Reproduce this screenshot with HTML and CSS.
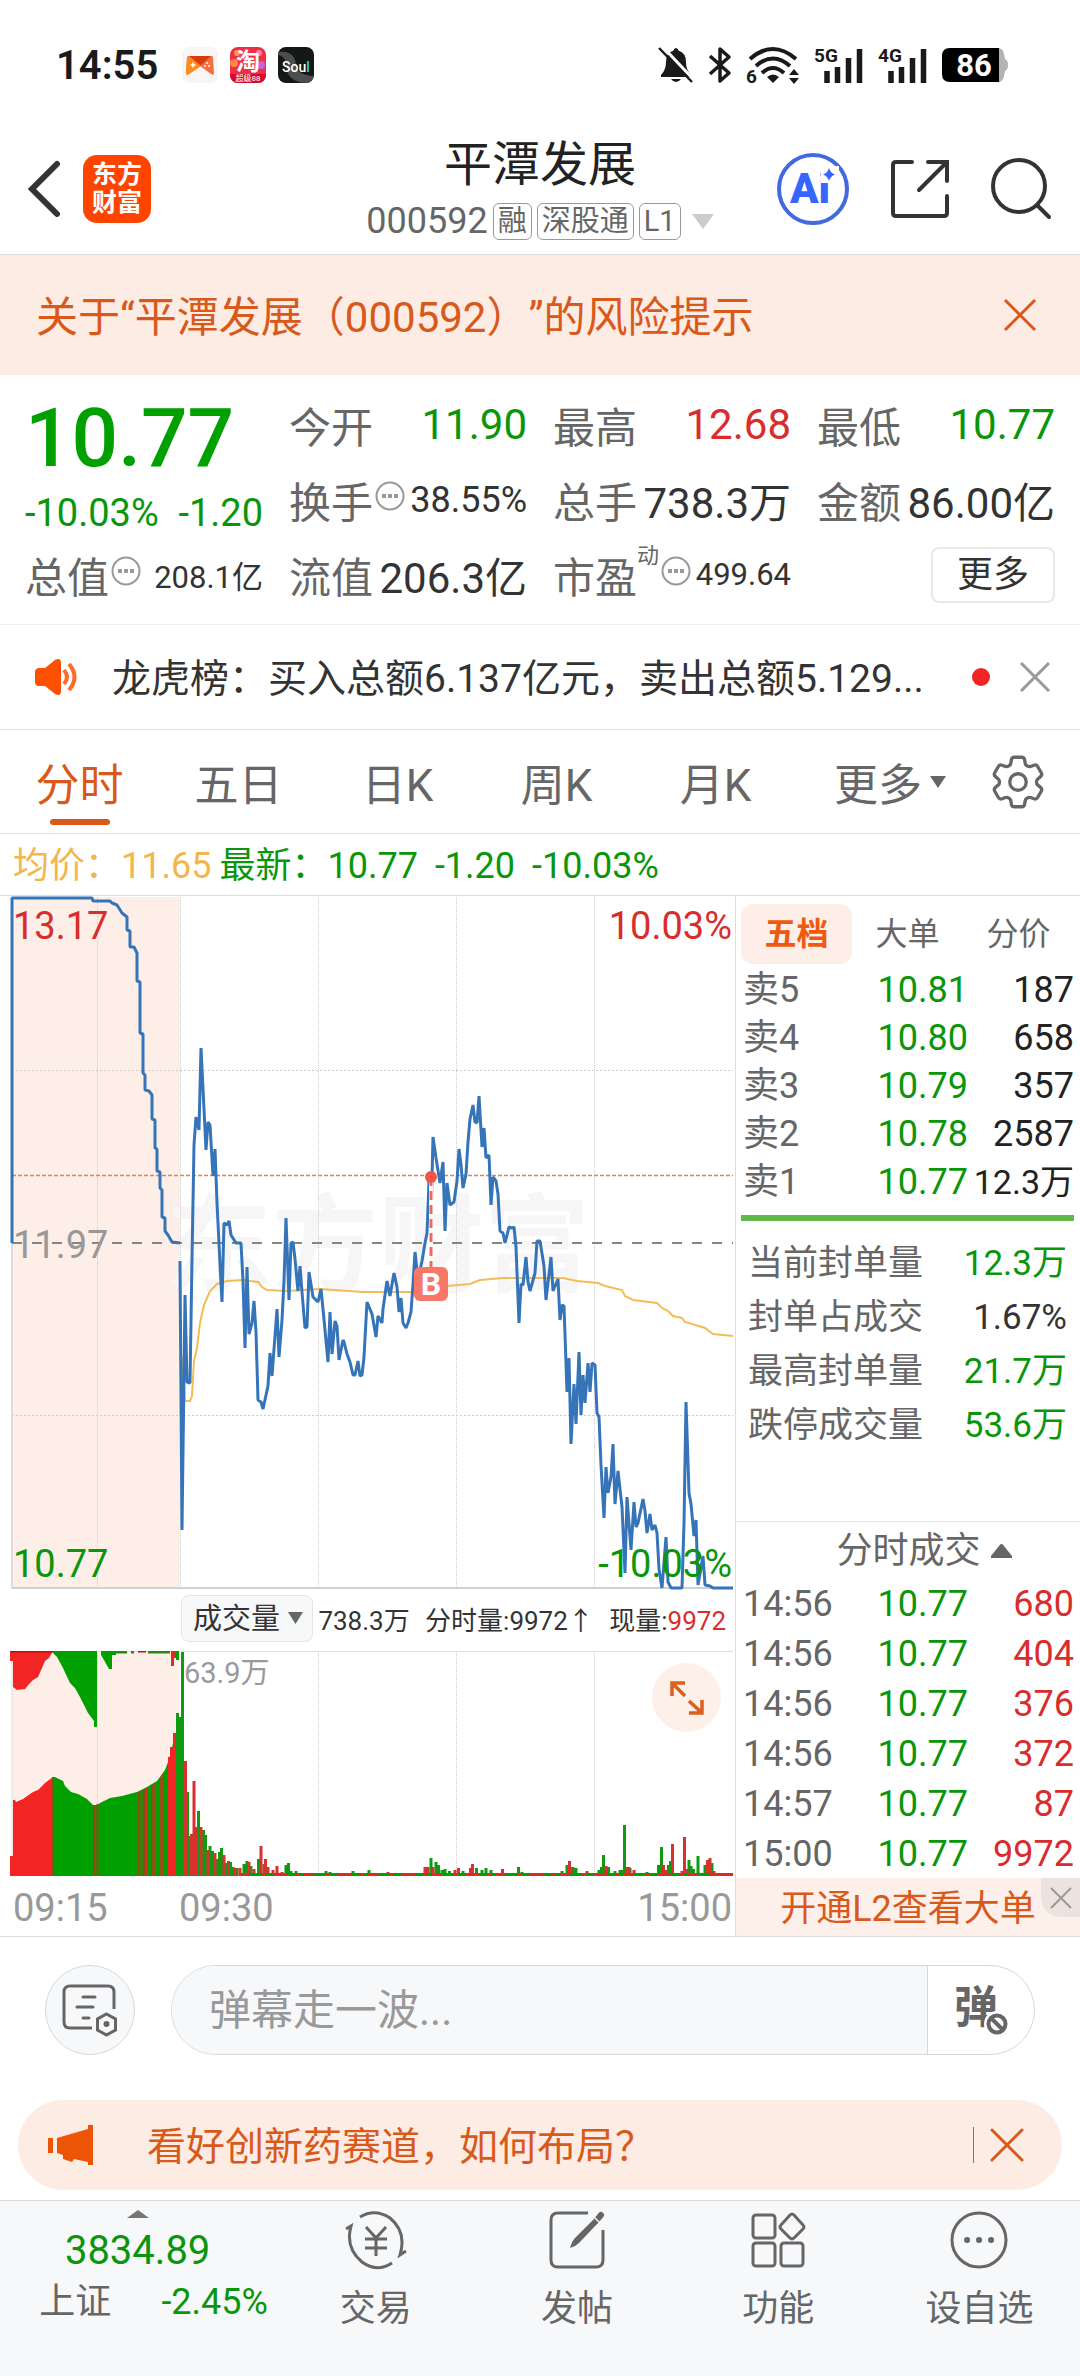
FILE: index.html
```html
<!DOCTYPE html>
<html lang="zh-CN">

<head>
    <meta charset="UTF-8">
    <meta name="viewport" content="width=device-width, initial-scale=1.0">
    <title>平潭发展 000592</title>
    <link rel="stylesheet" href="styles.css">
</head>

<body>
    <!-- status bar -->
    <div class="status-bar">
        <span class="clock">14:55</span>
        <svg class="app-icon" viewBox="0 0 36 36">
            <rect width="36" height="36" rx="8" fill="#f7f6f5"/>
            <path d="M6 9h24q1 0 1 2l1 15q0 3-3 1l-11-8-11 8q-3 2-3-1l1-15q0-2 1-2z" fill="#f7703c"/>
            <path d="M7 9h22l-11 10z" fill="#d63c0c"/>
            <path d="M7 9l12 10-12 8q-3 2-3-1l1-15z" fill="#ff8a1c"/>
            <path d="M8.500 18h5M11 15.500v5" stroke="#fff" stroke-width="1.500"/>
            <circle cx="25" cy="16" r="1" fill="#fff"/><circle cx="23" cy="19" r="1" fill="#fff"/><circle cx="27" cy="19" r="1" fill="#fff"/>
        </svg>
        <svg class="app-icon" viewBox="0 0 36 36">
            <rect width="36" height="36" rx="8" fill="#ee2f4a"/>
            <circle cx="7" cy="6" r="3" fill="#ff9a4a"/><circle cx="31" cy="18" r="4" fill="#c565d8"/><circle cx="4" cy="16" r="4" fill="#ff8a3a"/><circle cx="29" cy="6" r="3" fill="#ff7fa0"/>
            <path d="M0 27h36v1a8 8 0 0 1-8 8H8a8 8 0 0 1-8-8z" fill="#d8092f"/>
            <text class="tao" x="18" y="23">淘</text>
            <text class="tao-sub" x="18" y="34">超级88</text>
        </svg>
        <svg class="app-icon" viewBox="0 0 36 36">
            <rect width="36" height="36" rx="8" fill="#161817"/>
            <path d="M0 5q18-2 18 15 2 8 18 9-2 7-8 7-16-1-19-12Q9 9 0 8z" fill="#4b4e4d"/>
            <text class="soul" x="18" y="25">Sou<tspan fill="#2ad6c8">l</tspan></text>
        </svg>
        <div class="status-icons">
            <svg width="36" height="38" viewBox="0 0 36 38">
                <path d="M18 2q2 0 2.500 2.500Q28 7 28 16q0 8 5 13v2H3v-2q5-5 5-13 0-9 7.500-11.500Q16 2 18 2z" fill="#1a1a1a"/>
                <path d="M13 33h10q-2 3-5 3t-5-3z" fill="#1a1a1a"/>
                <path d="M3-1l34 36" stroke="#fff" stroke-width="3"/>
                <path d="M1 2l33 34" stroke="#1a1a1a" stroke-width="2.500"/>
            </svg>
            <svg width="24" height="38" viewBox="0 0 24 38">
                <path d="M2 10l19 17-9 8V3l9 8L2 28" fill="none" stroke="#1a1a1a" stroke-width="3.500" stroke-linejoin="round"/>
            </svg>
            <svg width="54" height="50" viewBox="0 -6 54 50">
                <g fill="none" stroke="#1a1a1a" stroke-width="4">
                    <path d="M4 13q23-20 46 0"/><path d="M10 20q17-15 34 0"/><path d="M16 27q11-10 22 0"/>
                </g>
                <path d="M27 37l-6-6q6-5 12 0z" fill="#1a1a1a"/>
                <path d="M48 23l5 6H43zM48 38l5-6H43z" fill="#1a1a1a"/>
                <text class="net" x="0" y="37">6</text>
            </svg>
            <svg width="50" height="50" viewBox="0 -6 50 50">
                <text class="net" x="0" y="16">5G</text>
                <path d="M13 37V25M23.500 37V21M34.500 37V12M45.500 37V3" stroke="#1a1a1a" stroke-width="5.500"/>
            </svg>
            <svg width="50" height="50" viewBox="0 -6 50 50">
                <text class="net" x="0" y="16">4G</text>
                <path d="M13 37V25M23.500 37V21M34.500 37V12M45.500 37V3" stroke="#1a1a1a" stroke-width="5.500"/>
            </svg>
            <svg width="66" height="34" viewBox="0 0 66 34">
                <path d="M50 0h6q5 0 6 6l1 5q3 1 3 6t-3 6l-1 5q-1 6-6 6h-6z" fill="#b3b3b3"/>
                <path d="M8 0h49v34H8q-8 0-8-8V8q0-8 8-8z" fill="#000"/>
                <text class="battery" x="32" y="28">86</text>
            </svg>
        </div>
    </div>

    <!-- title bar -->
    <header class="header">
        <div class="header-left">
            <button class="icon-btn" aria-label="返回">
                <svg width="34" height="58" viewBox="0 0 34 58"><path d="M29 4L4 29l25 25" fill="none" stroke="#333" stroke-width="6" stroke-linecap="round"/></svg>
            </button>
            <a class="logo" href="#">东方<br>财富</a>
        </div>
        <div class="title">
            <h1>平潭发展</h1>
            <div class="subtitle">
                <span>000592</span>
                <span class="tag">融</span>
                <span class="tag">深股通</span>
                <span class="tag">L1</span>
                <svg width="22" height="15" viewBox="0 0 22 15"><path d="M0 0h22L11 15z" fill="#ccc"/></svg>
            </div>
        </div>
        <div class="header-right">
            <button class="icon-btn" aria-label="Ai">
                <svg width="74" height="74" viewBox="0 0 74 74">
                    <circle cx="37" cy="37" r="34" fill="none" stroke="#4169e1" stroke-width="4"/>
                    <text class="ai" x="14" y="51">Ai</text>
                    <path d="M45 14h18v17H45z" fill="#fff"/>
                    <path d="M53 16q1.500 5 6 6.500-4.500 1.500-6 6.500-1.500-5-6-6.500 4.500-1.500 6-6.500z" fill="#3766ff"/>
                </svg>
            </button>
            <button class="icon-btn" aria-label="分享">
                <svg width="60" height="60" viewBox="0 0 60 60">
                    <path d="M22 3H6Q3 3 3 6v48q0 3 3 3h48q3 0 3-3V37M38 3h19v19M56 4L29 31" fill="none" stroke="#333" stroke-width="4" stroke-linecap="round"/>
                </svg>
            </button>
            <button class="icon-btn" aria-label="搜索">
                <svg width="62" height="62" viewBox="0 0 62 62">
                    <circle cx="29" cy="28" r="26" fill="none" stroke="#333" stroke-width="4"/>
                    <path d="M47 47l12 12" stroke="#333" stroke-width="4" stroke-linecap="round"/>
                </svg>
            </button>
        </div>
    </header>

    <!-- risk banner -->
    <div class="risk">
        <a href="#">关于“平潭发展（000592）”的风险提示</a>
        <button class="icon-btn" aria-label="关闭">
            <svg width="34" height="34" viewBox="0 0 34 34"><path d="M2 2l30 30M32 2L2 32" stroke="#d9591a" stroke-width="3"/></svg>
        </button>
    </div>

    <!-- quote summary -->
    <section class="quote">
        <div class="quote-price">
            <strong>10.77</strong>
            <p><span>-10.03%</span><span>-1.20</span></p>
        </div>
        <dl class="stat"><dt>今开</dt><dd class="green">11.90</dd></dl>
        <dl class="stat"><dt>最高</dt><dd class="red">12.68</dd></dl>
        <dl class="stat"><dt>最低</dt><dd class="green">10.77</dd></dl>
        <dl class="stat"><dt>换手<svg class="more-dot" viewBox="0 0 30 30"><circle cx="15" cy="15" r="13.500" fill="none" stroke="#999" stroke-width="2"/><path d="M7 15h4M13 15h4M19 15h4" stroke="#999" stroke-width="4"/></svg></dt><dd class="mid">38.55%</dd></dl>
        <dl class="stat"><dt>总手</dt><dd>738.3万</dd></dl>
        <dl class="stat"><dt>金额</dt><dd>86.00亿</dd></dl>
        <dl class="stat"><dt>总值<svg class="more-dot" viewBox="0 0 30 30"><circle cx="15" cy="15" r="13.500" fill="none" stroke="#999" stroke-width="2"/><path d="M7 15h4M13 15h4M19 15h4" stroke="#999" stroke-width="4"/></svg></dt><dd class="small">208.1亿</dd></dl>
        <dl class="stat"><dt>流值</dt><dd>206.3亿</dd></dl>
        <dl class="stat"><dt>市盈<sup>动</sup><svg class="more-dot" viewBox="0 0 30 30"><circle cx="15" cy="15" r="13.500" fill="none" stroke="#999" stroke-width="2"/><path d="M7 15h4M13 15h4M19 15h4" stroke="#999" stroke-width="4"/></svg></dt><dd class="small">499.64</dd></dl>
        <div class="stat stat-btn"><button class="more-btn">更多</button></div>
    </section>

    <!-- news ticker -->
    <div class="news">
        <svg width="46" height="38" viewBox="0 0 46 38">
            <path d="M2 14q0-3 3-4h7L22 2q6-3 6 3v28q0 6-6 3l-10-8H5q-3-1-3-4z" fill="#ff5000"/>
            <path d="M31 12q6 7 0 14M36 6q11 13 0 26" fill="none" stroke="#ff6a28" stroke-width="4"/>
        </svg>
        <a href="#">龙虎榜：买入总额6.137亿元，卖出总额5.129...</a>
        <i class="dot"></i>
        <button class="icon-btn" aria-label="关闭">
            <svg width="30" height="30" viewBox="0 0 30 30"><path d="M1 1l28 28M29 1L1 29" stroke="#999" stroke-width="3"/></svg>
        </button>
    </div>

    <!-- period tabs -->
    <nav class="tabs">
        <button class="tab active">分时</button>
        <button class="tab">五日</button>
        <button class="tab">日K</button>
        <button class="tab">周K</button>
        <button class="tab">月K</button>
        <button class="tab tab-more">更多<svg width="16" height="12" viewBox="0 0 16 12"><path d="M0 0h16L8 12z" fill="#666"/></svg></button>
        <button class="tab tab-gear" aria-label="设置">
            <svg width="66" height="66" viewBox="0 0 24 24" fill="none" stroke="#666" stroke-width="1.200">
                <path d="M9.594 3.94c.09-.542.56-.94 1.11-.94h2.593c.55 0 1.02.398 1.11.94l.213 1.281c.063.374.313.686.645.87.074.04.147.083.22.127.325.196.72.257 1.075.124l1.217-.456a1.125 1.125 0 0 1 1.37.49l1.296 2.247a1.125 1.125 0 0 1-.26 1.431l-1.003.827c-.293.241-.438.613-.43.992a7.723 7.723 0 0 1 0 .255c-.008.378.137.75.43.991l1.004.827c.424.35.534.955.26 1.43l-1.298 2.247a1.125 1.125 0 0 1-1.369.491l-1.217-.456c-.355-.133-.75-.072-1.076.124a6.47 6.47 0 0 1-.22.128c-.331.183-.581.495-.644.869l-.213 1.281c-.09.543-.56.94-1.11.94h-2.594c-.55 0-1.019-.398-1.11-.94l-.213-1.281c-.062-.374-.312-.686-.644-.87a6.52 6.52 0 0 1-.22-.127c-.325-.196-.72-.257-1.076-.124l-1.217.456a1.125 1.125 0 0 1-1.369-.49l-1.297-2.247a1.125 1.125 0 0 1 .26-1.431l1.004-.827c.292-.24.437-.613.43-.991a6.932 6.932 0 0 1 0-.255c.007-.38-.138-.751-.43-.992l-1.004-.827a1.125 1.125 0 0 1-.26-1.43l1.297-2.247a1.125 1.125 0 0 1 1.37-.491l1.216.456c.356.133.751.072 1.076-.124.072-.044.146-.086.22-.128.332-.183.582-.495.644-.869l.214-1.28Z"/>
                <circle cx="12" cy="12" r="3"/>
            </svg>
        </button>
    </nav>

    <div class="legend">
        <span class="avg">均价：11.65</span>
        <span class="green">最新：10.77</span>
        <span class="green">-1.20</span>
        <span class="green">-10.03%</span>
    </div>

    <main class="board">
        <div class="charts">
            <!-- price chart -->
            <svg class="chart" viewBox="0 0 735 694">
                <rect x="12" y="1" width="168" height="691" fill="#fdeee7"/>
                <text class="watermark" x="166" y="387">东方财富</text>
                <path d="M12 174.500H733M12 519.500H733" stroke="#ccc" stroke-dasharray="2 2"/>
                <path d="M97.500 1V691M180.500 1V691M318.500 1V691M456.500 1V691M594.500 1V691" stroke="#ccc" stroke-dasharray="1 1"/>
                <path d="M12 1V692" stroke="#ddd" stroke-width="2"/>
                <path d="M12 692H733" stroke="#d0d0d0" stroke-width="2"/>
                <path d="M12 279.500H733" stroke="#e0834f" stroke-width="1.500" stroke-dasharray="4 2"/>
                <path d="M12 347H733" stroke="#858585" stroke-width="2" stroke-dasharray="10 10"/>
                <text class="lab red" x="13" y="43">13.17</text>
                <text class="lab grey" x="13" y="362">11.97</text>
                <text class="lab green" x="13" y="681">10.77</text>
                <text class="lab red end" x="732" y="43">10.03%</text>
                <path class="avg-line" d="M182 460L185 505 190 505 192 500 194 465 197 452 200 427 204 409 210 395 217 388 227 385 243 384 258 386 262 391 267 394 287 395 320 393 363 396 423 396 433 393 447 390 470 388 480 384 503 382 563 382 577 385 598 387 605 390 622 394 625 400 633 404 657 407 662 412 668 415 673 420 682 422 685 426 705 432 713 438 733 440"/>
                <path class="price-line" d="M12 347V2H92L93 5H110L112 7 117 9 122 17 127 21V34L130 35V51H134L137 57V85L140 86V137L143 138V177L145 179V194L149 195 152 199V223L155 224V252L157 253V275L160 276V292L162 294V321L165 322V335L168 339 172 346 180 347"/>
                <path class="price-line" d="M180 365L182 634 185 399 187 486 190 487 192 363 194 249 196 221 199 234 201 152 206 254 208 226 210 229 213 280 215 253 217 307 220 368 222 406 224 327 227 329 229 325 231 339 236 347 241 347 243 385 245 452 247 371 249 438 252 427 254 405 256 436 258 504 261 506 263 513 268 490 270 457 272 480 277 413 279 461 282 424 284 385 286 322 289 404 291 347 293 346 295 363 298 395 300 370 302 396 305 432 307 431 309 376 313 401 318 406 321 393 323 413 328 466 330 416 332 458 335 425 337 430 339 464 343 444 344 446 347 458 350 466 353 479 355 479 358 465 360 480 362 479 364 461 367 406 372 418 376 441 378 420 382 427 383 413 387 385 390 400 394 377 397 391 399 416 401 402 403 427 406 432 408 427 411 416 413 388 415 356 418 383 422 365 425 347 427 337 429 285 431 324 433 241 436 262 440 287 443 266 445 335 447 287 450 309 454 306 457 285 459 253 461 269 463 292 466 278 468 246 470 223 473 209 475 226 477 227 479 200 482 251 484 232 486 262 489 259 491 309 493 281 496 285 498 298 500 335 503 337 505 347 509 331 512 332 514 331 516 351 519 427 521 388 523 389 526 361 528 386 530 395 535 377 537 345 540 345 544 370 546 404 551 361 553 395 558 383 560 424 562 409 564 410 567 496 569 462 571 548 574 488 576 528 579 456 581 519 583 479 585 507 588 467 590 496 592 467 595 469 597 517 599 521 601 569 604 622 606 571 608 597 611 581 613 548 615 608 618 575 622 611 625 677 627 601 631 654 634 606 636 631 638 627 643 603 645 615 647 637 650 618 652 634 655 629 657 637 659 673 662 692 666 641 668 686 671 692 682 692 684 627 686 506 689 597 691 608 694 640 696 624 698 689 703 660 705 689 710 690 713 692 733 692"/>
                <path d="M431 281V371" stroke="#fff" stroke-width="4"/>
                <path d="M431 281V371" stroke="#ef6a5e" stroke-width="3" stroke-dasharray="9 5"/>
                <circle cx="431" cy="281" r="6" fill="#f15545"/>
                <rect x="414" y="371" width="34" height="34" rx="6" fill="#f97767"/>
                <text class="buy" x="431" y="399">B</text>
                <text class="lab green end" x="732" y="681">-10.03%</text>
            </svg>

            <div class="vol-bar">
                <div class="vol-select">
                    <select aria-label="指标">
                        <option>成交量</option>
                        <option>MACD</option>
                    </select>
                    <svg width="15" height="12" viewBox="0 0 15 12"><path d="M0 0h15L7.500 12z" fill="#666"/></svg>
                </div>
                <span>738.3万</span>
                <span>分时量:9972↑</span>
                <span>现量:<b class="red">9972</b></span>
            </div>

            <!-- volume chart -->
            <div class="volume">
                <svg class="chart" viewBox="0 0 735 225">
                    <rect x="12" y="0" width="168" height="225" fill="#fdeee7"/>
                    <path d="M97.500 0V225M318.500 0V225M456.500 0V225M594.500 0V225" stroke="#ccc" stroke-dasharray="1 1"/>
                    <path d="M12 0V225" stroke="#ddd"/>
                    <path d="M10 .5H733" stroke="#ddd"/>
                    <!-- unmatched orders, hanging from the top -->
                    <path fill="#f22424" d="M10 0H53L49 7 45 10 42 17 38 26 33 29 29 33 25 38 17 39 13 36V10H10z"/>
                    <path fill="#00a000" d="M53 0H97V76H94V70L88 62 80 46 75 37 70 32 63 17 57 6 53 2zM101 0H116V4H112V18H109L104 9 101 4z"/>
                    <path d="M10 .5H53M138 .5H146" stroke="#c01010" stroke-width="2"/>
                    <path d="M116 1H127M131 1H134M148 1H170" stroke="#2a8a10" stroke-width="3"/>
                    <path d="M172.500 0V15M175 0V7" stroke="#e02a20" stroke-width="3"/>
                    <path d="M177.500 0V9" stroke="#00a000" stroke-width="3"/>
                    <!-- auction volume -->
                    <path fill="#f22424" d="M10 225V205H13V149H15L16 151 23 148 33 141 38 139 45 132 53 126V225z"/>
                    <path fill="#00a000" d="M53 225V126H55L63 130 65 135 71 141 78 143 87 148 93 154 97 154 100 152 110 147 122 145 137 141 147 136 157 130 165 119 168 111 171 102 175 82V225z"/>
                    <path d="M53 225V126M94 225V155M97.500 225V153M139 225V141M144 225V138M152 225V134" stroke="#8f4a18" stroke-width="2"/>
                    <path d="M141.500 225V139M146.500 225V137M154 225V133M160 225V127M163 225V123" stroke="#d03020" stroke-width="1.500"/>
                    <path d="M169.500 225V106M171.500 225V96M174.500 225V82" stroke="#f22424" stroke-width="3"/>
                    <!-- traded volume, one bar a minute -->
                    <path class="vol-down" d="M177.500 225V62M180 225V66M182.500 225V1M187.500 225V141M189.500 225V185M198.500 225V160M203.500 225V179M205.500 225V184M210 225V195M212.500 225V200M217 225V208M219.500 225V201M221.500 225V197M226 225V212M230.500 225V211M233 225V216M237 225V217M244 225V213M247 225V210M251 225V215M258.500 225V208M264 225V213M286 225V214M288.500 225V212M291 225V220M296 225V220M326 225V220M330 225V221M353 225V220M369 225V219M431 225V207M436 225V211M438.500 225V214M442 225V219M445 225V218M449.500 225V220M463 225V220M476.500 225V217M482 225V219M486 225V217M491 225V219M518.500 225V216M522 225V221M562 225V220M567 225V214M573 225V216M576 225V217M599 225V219M601.500 225V216M603.500 225V204M608.500 225V216M615 225V220M620 225V219M622 225V219M624.500 225V174M630 225V217M647 225V221M658.500 225V214M661.500 225V196M668.500 225V214M670.500 225V210M689 225V209M691 225V215M693.500 225V218M698 225V205M705 225V214M712 225V212"/>
                    <path class="vol-up" d="M185.500 225V110M191.500 225V183M194 225V130M196.500 225V176M201 225V176M208 225V199M215 225V202M224 225V204M228.500 225V210M235 225V217M240 225V217M249 225V211M254 225V218M261 225V195M265.500 225V208M268 225V216M273 225V219M277 225V215M282 225V221M388 225V221M425 225V216M428 225V216M433 225V216M455 225V219M458.500 225V217M470.500 225V217M472.500 225V213M502.500 225V218M569.500 225V210M571 225V216M587 225V220M606 225V215M627 225V216M629 225V216M634 225V219M663.500 225V214M666 225V219M672.500 225V193M682 225V220M684.500 225V186M687 225V218M707.500 225V209M710 225V207M714 225V220"/>
                    <path d="M240 223.500H720" stroke="#00a000" stroke-width="3"/>
                    <path d="M240 223.500H733" stroke="#e02a20" stroke-width="3" stroke-dasharray="9 12 5 7 14 9 3 5"/>
                    <path d="M714 223.500H733" stroke="#e02a20" stroke-width="3"/>
                    <text class="vol-max" x="184" y="32">63.9万</text>
                </svg>
                <button class="expand" aria-label="全屏">
                    <svg width="34" height="34" viewBox="0 0 34 34"><path d="M2 15V2h13M2 2l13 13M32 19v13H19M32 32L19 20" fill="none" stroke="#dd5f1e" stroke-width="3.500"/></svg>
                </button>
            </div>

            <div class="axis">
                <span>09:15</span>
                <span>09:30</span>
                <span>15:00</span>
            </div>
        </div>

        <!-- order book -->
        <aside class="book">
            <div class="book-tabs">
                <button class="book-tab active">五档</button>
                <button class="book-tab">大单</button>
                <button class="book-tab">分价</button>
            </div>
            <table class="depth">
                <tr><th>卖5</th><td>10.81</td><td>187</td></tr>
                <tr><th>卖4</th><td>10.80</td><td>658</td></tr>
                <tr><th>卖3</th><td>10.79</td><td>357</td></tr>
                <tr><th>卖2</th><td>10.78</td><td>2587</td></tr>
                <tr><th>卖1</th><td>10.77</td><td class="fit">12.3万</td></tr>
            </table>
            <div class="ratio"></div>
            <table class="limit">
                <tr><th>当前封单量</th><td class="green">12.3万</td></tr>
                <tr><th>封单占成交</th><td>1.67%</td></tr>
                <tr><th>最高封单量</th><td class="green">21.7万</td></tr>
                <tr><th>跌停成交量</th><td class="green">53.6万</td></tr>
            </table>
            <button class="ticks-title">分时成交<svg width="21" height="14" viewBox="0 0 21 14"><path d="M10.500 0Q12 0 13 2l8 10v2H0v-2L8 2q1-2 2.500-2z" fill="#666"/></svg></button>
            <table class="depth ticks">
                <tr><th>14:56</th><td>10.77</td><td>680</td></tr>
                <tr><th>14:56</th><td>10.77</td><td>404</td></tr>
                <tr><th>14:56</th><td>10.77</td><td>376</td></tr>
                <tr><th>14:56</th><td>10.77</td><td>372</td></tr>
                <tr><th>14:57</th><td>10.77</td><td>87</td></tr>
                <tr><th>15:00</th><td>10.77</td><td>9972</td></tr>
            </table>
            <div class="level2">
                <a href="#">开通L2查看大单</a>
                <button class="level2-close" aria-label="关闭">
                    <svg width="22" height="22" viewBox="0 0 22 22"><path d="M1 1l20 20M21 1L1 21" stroke="#999" stroke-width="2"/></svg>
                </button>
            </div>
        </aside>
    </main>

    <!-- bullet comments -->
    <form class="danmu">
        <button class="danmu-set" type="button" aria-label="弹幕设置">
            <svg width="56" height="54" viewBox="0 0 56 54" fill="none" stroke="#666" stroke-width="3">
                <path d="M30 45H8q-6 0-6-6V9q0-6 6-6h38q6 0 6 6v17"/>
                <path d="M21 14h12M15 24h16M21 35h6" stroke-linecap="round"/>
                <path d="M44.500 31l9 5v11l-9 5-9-5V36z"/>
                <circle cx="44.500" cy="41" r="1.500"/>
            </svg>
        </button>
        <div class="danmu-box">
            <input type="text" placeholder="弹幕走一波..." aria-label="弹幕">
            <button class="danmu-off" type="button" aria-label="关闭弹幕">
                <svg width="58" height="64" viewBox="-1 -5 58 64">
                    <text class="dan" x="0" y="40">弹</text>
                    <circle cx="43" cy="41" r="13" fill="#fff"/>
                    <circle cx="43" cy="41" r="8.500" fill="none" stroke="#666" stroke-width="4"/>
                    <path d="M37 35l12 12" stroke="#666" stroke-width="4"/>
                </svg>
            </button>
        </div>
    </form>

    <div class="promo">
        <svg width="46" height="40" viewBox="0 0 46 40"><path d="M0 13h5v15H0zM9 13l31-9V0h5v40h-5v-3l-14-3-2 3-9-3v-4l-6-2z" fill="#eb5505"/></svg>
        <a href="#">看好创新药赛道，如何布局？</a>
        <i class="sep"></i>
        <button class="icon-btn" aria-label="关闭">
            <svg width="34" height="34" viewBox="0 0 34 34"><path d="M2 2l30 30M32 2L2 32" stroke="#d9591a" stroke-width="3" stroke-linecap="round"/></svg>
        </button>
    </div>

    <!-- bottom bar -->
    <footer class="bottom">
        <a class="index" href="#">
            <svg width="22" height="8" viewBox="0 0 22 8"><path d="M11 0l11 8H0z" fill="#777"/></svg>
            <strong>3834.89</strong>
            <span class="index-row"><span>上证</span><span class="green">-2.45%</span></span>
        </a>
        <a class="item" href="#">
            <svg viewBox="0 0 66 60" fill="none" stroke="#666" stroke-width="3">
                <path d="M17 7Q32-2 47 8 64 22 57 45l6-4M49 53Q34 63 19 52 2 38 8 16l-5 3"/>
                <path d="M23 17l10 11 10-11M33 28v18M22 29h22M22 38h22"/>
            </svg>
            <span>交易</span>
        </a>
        <a class="item" href="#">
            <svg viewBox="0 0 66 60" fill="none" stroke="#666" stroke-width="3">
                <path d="M44 3H14q-7 0-7 7v40q0 7 7 7h38q7 0 7-7V20"/>
                <path d="M26 38q2-7 5-10l18-18 4 4-18 19q-4 4-9 5z" fill="#666" stroke="none"/>
                <path d="M52 11l5-6" stroke-width="6" stroke-linecap="round"/>
                <path d="M50 7l6 6" stroke="#f7f8fa" stroke-width="1.500"/>
            </svg>
            <span>发帖</span>
        </a>
        <a class="item" href="#">
            <svg viewBox="0 0 66 60" fill="none" stroke="#666" stroke-width="3">
                <rect x="8" y="5" width="22" height="23" rx="3"/>
                <rect x="8" y="33" width="22" height="23" rx="3"/>
                <rect x="36" y="33" width="22" height="23" rx="3"/>
                <path d="M45 5q2-2 4 0l9 10q2 2 0 4l-9 9q-2 2-4 0l-9-9q-2-2 0-4z"/>
            </svg>
            <span>功能</span>
        </a>
        <a class="item" href="#">
            <svg viewBox="0 0 66 60" fill="none" stroke="#666" stroke-width="3">
                <circle cx="33" cy="30" r="27"/>
                <path d="M21 30h.1M33 30h.1M45 30h.1" stroke-width="6" stroke-linecap="round"/>
            </svg>
            <span>设自选</span>
        </a>
    </footer>
</body>

</html>
```

FILE: styles.css
```css
* {
    margin: 0;
    padding: 0;
    box-sizing: border-box;
}

body {
    display: flex;
    flex-direction: column;
    min-height: 100vh;
    background: #fff;
    color: #333;
    font-family: Roboto, "Noto Sans CJK SC", sans-serif;
    font-size: 36px;
    text-spacing-trim: space-all;
}

a {
    color: inherit;
    text-decoration: none;
}

button,
input,
select {
    border: none;
    background: none;
    color: inherit;
    font: inherit;
}

button {
    cursor: pointer;
}

svg {
    display: block;
    flex-shrink: 0;
}

th,
dt {
    font-weight: 400;
}

.green {
    color: #0a960a;
    fill: #0a960a;
}

.red {
    color: #d92d2d;
    fill: #d92d2d;
}

.grey {
    fill: #999;
}

.icon-btn {
    display: flex;
}

/* status bar */
.status-bar {
    display: flex;
    align-items: center;
    gap: 12px;
    height: 130px;
    padding: 0 72px 0 56px;
}

.clock {
    margin-right: 12px;
    color: #1a1a1a;
    font-size: 40px;
    font-weight: 600;
}

.app-icon {
    width: 36px;
    height: 36px;
}

.tao {
    fill: #fff;
    font-size: 24px;
    font-weight: 700;
    text-anchor: middle;
}

.tao-sub {
    fill: #fff;
    font-size: 8px;
    text-anchor: middle;
}

.soul {
    fill: #fff;
    font-size: 14px;
    font-weight: 500;
    text-anchor: middle;
}

.status-icons {
    display: flex;
    align-items: center;
    gap: 14px;
    margin-left: auto;
}

.net {
    fill: #1a1a1a;
    font-size: 19px;
    font-weight: 700;
}

.battery {
    fill: #fff;
    font-size: 31px;
    font-weight: 700;
    text-anchor: middle;
}

/* header */
.header {
    display: grid;
    grid-template-columns: 1fr auto 1fr;
    align-items: center;
    height: 125px;
    padding: 0 28px 6px;
    border-bottom: 1px solid #ddd;
}

.header-left {
    display: flex;
    align-items: center;
    gap: 21px;
}

.logo {
    width: 68px;
    height: 68px;
    padding-top: 6px;
    border-radius: 14px;
    background: #ff4400;
    color: #fff;
    font-size: 25px;
    font-weight: 700;
    line-height: 28px;
    text-align: center;
}

.title {
    text-align: center;
}

.title h1 {
    color: #222;
    font-size: 48px;
    font-weight: 400;
    line-height: 60px;
}

.subtitle {
    display: flex;
    align-items: center;
    gap: 5px;
    margin-top: 4px;
    color: #666;
    line-height: 44px;
}

.tag {
    padding: 0 4px;
    border: 1px solid #999;
    border-radius: 6px;
    font-size: 29px;
    line-height: 35px;
}

.subtitle svg {
    margin-left: 6px;
}

.header-right {
    display: flex;
    align-items: center;
    justify-content: flex-end;
    gap: 40px;
}

.ai {
    fill: #3766ff;
    font-size: 42px;
    font-weight: 900;
}

/* risk banner */
.risk {
    display: flex;
    align-items: center;
    justify-content: space-between;
    height: 120px;
    padding: 0 43px 0 36px;
    background: #fcece4;
    color: #d9591a;
    font-size: 42px;
}

.risk a,
.news a,
.promo a {
    padding-bottom: 4px;
}

/* quote */
.quote {
    display: grid;
    grid-template-columns: repeat(4, 1fr);
    grid-auto-rows: 75px;
    column-gap: 26px;
    padding: 12px 25px;
    border-bottom: 1px solid #eee;
}

.quote-price {
    grid-row: span 2;
    color: #00a000;
}

.quote-price strong {
    display: block;
    font-size: 82px;
    font-weight: 500;
    line-height: 102px;
}

.quote-price p {
    display: flex;
    justify-content: space-between;
    color: #0a960a;
    font-size: 38px;
    line-height: 48px;
}

.stat {
    display: flex;
    align-items: center;
    justify-content: space-between;
    font-size: 42px;
    white-space: nowrap;
}

.stat dt {
    display: flex;
    align-items: center;
    color: #666;
}

.stat sup {
    align-self: flex-start;
    font-size: 22px;
    line-height: 24px;
}

.stat .mid {
    font-size: 36px;
}

.stat .small {
    font-size: 31px;
}

.more-dot {
    width: 30px;
    height: 30px;
    margin: 0 0 8px 2px;
}

.stat-btn {
    justify-content: flex-end;
}

.more-btn {
    width: 124px;
    border: 2px solid #e8e8e8;
    border-radius: 8px;
    font-size: 36px;
    line-height: 52px;
}

/* news */
.news {
    display: flex;
    align-items: center;
    height: 105px;
    padding: 0 30px 0 33px;
    border-bottom: 1px solid #ddd;
    font-size: 39px;
}

.news a {
    flex: 1;
    margin-left: 33px;
    overflow: hidden;
    white-space: nowrap;
}

.dot {
    width: 18px;
    height: 18px;
    margin-right: 30px;
    border-radius: 50%;
    background: #f22424;
}

/* tabs */
.tabs {
    display: flex;
    height: 104px;
    border-bottom: 1px solid #ddd;
    color: #666;
    font-size: 44px;
}

.tab {
    position: relative;
    flex: 159;
    text-align: center;
}

.tab.active {
    color: #d9591a;
}

.tab.active::after {
    content: "";
    position: absolute;
    left: 50%;
    bottom: 8px;
    width: 60px;
    height: 6px;
    margin-left: -30px;
    border-radius: 3px;
    background: #d9591a;
}

.tab-more {
    display: flex;
    flex: 190;
    align-items: center;
    justify-content: center;
    gap: 8px;
}

.tab-gear {
    display: flex;
    flex: 95;
    align-items: center;
}

.legend {
    display: flex;
    gap: 17px;
    padding: 3px 13px 0;
    border-bottom: 1px solid #ddd;
    line-height: 58px;
}

.legend .avg {
    margin-right: -9px;
    color: #f2b64c;
}

/* board */
.board {
    display: grid;
    grid-template-columns: 735fr 345fr;
    border-bottom: 1px solid #ddd;
}

.charts {
    min-width: 0;
}

.chart {
    width: 100%;
    height: auto;
}

.lab {
    font-size: 38px;
}

.end {
    text-anchor: end;
}

.watermark {
    fill: #f6f6f6;
    font-size: 106px;
    font-weight: 700;
}

.price-line {
    fill: none;
    stroke: #3574b9;
    stroke-width: 3;
    stroke-linejoin: bevel;
}

.avg-line {
    fill: none;
    stroke: #f2bd58;
    stroke-width: 2;
}

.buy {
    fill: #fff;
    font-size: 32px;
    font-weight: 700;
    text-anchor: middle;
}

.vol-bar {
    display: flex;
    align-items: center;
    justify-content: space-between;
    height: 61px;
    padding: 0 9px 4px 181px;
    font-size: 26px;
    white-space: nowrap;
}

.vol-bar b {
    font-weight: 400;
}

.vol-select {
    position: relative;
    margin-right: -10px;
}

.vol-select select {
    width: 132px;
    height: 47px;
    padding-left: 11px;
    border: 1px solid #e3e5e8;
    border-radius: 8px;
    background: #f7f8fa;
    font-size: 29px;
    appearance: none;
}

.vol-select svg {
    position: absolute;
    top: 17px;
    right: 10px;
    pointer-events: none;
}

.volume {
    position: relative;
}

.vol-down {
    stroke: #109a10;
    stroke-width: 3;
}

.vol-up {
    stroke: #d93030;
    stroke-width: 3;
}

.vol-max {
    fill: #999;
    font-size: 29px;
}

.expand {
    position: absolute;
    top: 12px;
    right: 14px;
    display: flex;
    align-items: center;
    justify-content: center;
    width: 69px;
    height: 69px;
    border-radius: 50%;
    background: #fdf0e9;
}

.axis {
    display: grid;
    grid-template-columns: 166fr 200fr 353fr;
    padding: 4px 3px 0 13px;
    color: #999;
    font-size: 38px;
    line-height: 56px;
}

.axis span:last-child {
    text-align: right;
}

/* order book */
.book {
    display: flex;
    flex-direction: column;
    padding-top: 8px;
    border-left: 1px solid #ddd;
}

.book-tabs {
    display: flex;
    padding: 0 6px 2px 5px;
}

.book-tab {
    flex: 1;
    border-radius: 12px;
    color: #666;
    font-size: 32px;
    line-height: 60px;
}

.book-tab.active {
    background: #fdeee7;
    color: #ee5a10;
    font-weight: 700;
}

.book table {
    border-collapse: collapse;
    table-layout: fixed;
}

.depth {
    margin: 0 6px 0 7px;
}

.depth th {
    width: 90px;
    color: #666;
    line-height: 48px;
    text-align: left;
}

.depth td {
    width: 106px;
    color: #222;
    text-align: right;
}

.depth td:nth-child(2) {
    width: auto;
    color: #0a960a;
}

.depth .fit {
    font-size: 34px;
    line-height: 40px;
}

.ratio {
    height: 6px;
    margin: 9px 6px 16px 5px;
    background: #62b84a;
}

.limit {
    margin: 0 13px 0 12px;
    font-size: 35px;
    line-height: 54px;
}

.limit th {
    color: #666;
    text-align: left;
}

.limit td {
    text-align: right;
}

.ticks-title {
    display: flex;
    align-items: center;
    justify-content: center;
    gap: 10px;
    margin-top: auto;
    padding: 2px 0 0 32px;
    border-top: 1px solid #e8e8e8;
    color: #666;
    line-height: 54px;
}

.ticks th,
.ticks td {
    padding-top: 3px;
    line-height: 47px;
}

.ticks td:last-child {
    color: #d92d2d;
}

.level2 {
    position: relative;
    padding-top: 4px;
    background: #fdf0ea;
    color: #d9591a;
    line-height: 54px;
    text-align: center;
}

.level2-close {
    position: absolute;
    top: 0;
    right: 0;
    display: flex;
    align-items: center;
    justify-content: center;
    width: 39px;
    height: 39px;
    border-bottom-left-radius: 20px;
    background: #ede3de;
}

/* bullet comments */
.danmu {
    display: flex;
    gap: 36px;
    padding: 28px 45px 45px;
}

.danmu-set {
    display: flex;
    align-items: center;
    justify-content: center;
    width: 90px;
    height: 90px;
    border: 1px solid #d5d8dc;
    border-radius: 50%;
    background: #f7f8fa;
}

.danmu-box {
    display: flex;
    flex: 1;
    height: 90px;
    overflow: hidden;
    border: 1px solid #d5d8dc;
    border-radius: 45px;
}

.danmu-box input {
    flex: 1;
    min-width: 0;
    padding-left: 37px;
    background: #f7f8fa;
    font-size: 42px;
}

.danmu-box input::placeholder {
    color: #999;
}

.danmu-off {
    display: flex;
    align-items: center;
    width: 107px;
    padding-left: 25px;
    border-left: 1px solid #d5d8dc;
}

.dan {
    fill: #666;
    font-size: 44px;
    font-weight: 700;
}

/* promo */
.promo {
    display: flex;
    align-items: center;
    height: 90px;
    margin: 0 18px 10px;
    padding: 0 38px 0 30px;
    border-radius: 45px;
    background: #fcece3;
    color: #d9591a;
    font-size: 39px;
}

.promo a {
    flex: 1;
    margin-left: 53px;
}

.sep {
    width: 1px;
    height: 36px;
    margin-right: 16px;
    background: #d9591a;
}

/* bottom bar */
.bottom {
    display: flex;
    flex: 1;
    border-top: 1px solid #d5d8dc;
    background: #f7f8fa;
    color: #666;
}

.index {
    display: flex;
    flex: 275;
    flex-direction: column;
    align-items: center;
    padding-top: 9px;
}

.index strong {
    color: #0a960a;
    font-size: 40px;
    font-weight: 400;
    line-height: 66px;
}

.index-row {
    display: flex;
    gap: 50px;
    margin-left: 32px;
    line-height: 36px;
}

.item {
    display: flex;
    flex: 201;
    flex-direction: column;
    align-items: center;
    padding-top: 9px;
}

.item svg {
    width: 66px;
    height: 60px;
}

.item span {
    margin-top: 14px;
    line-height: 50px;
}
```
